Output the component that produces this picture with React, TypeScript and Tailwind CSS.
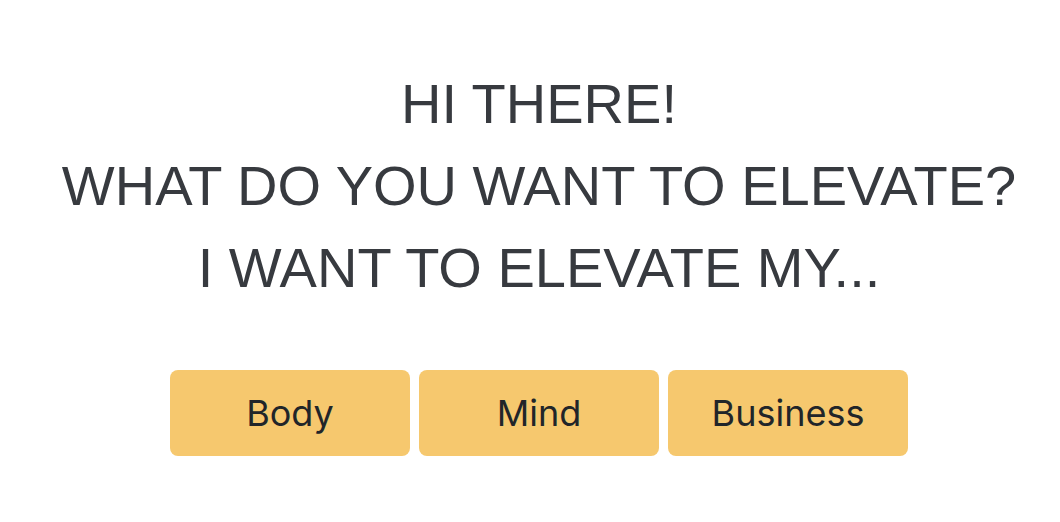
export default function App() {
  const options = ["Body", "Mind", "Business"];
  return (
    <div className="min-h-screen bg-white pt-[63px] pl-[18px] flex flex-col items-center">
      <h1
        className="text-center text-[56px] leading-[82px] text-[#373a3f] font-normal"
        style={{ fontFamily: '"Liberation Sans", Arial, sans-serif' }}
      >
        HI THERE!
        <br />
        WHAT DO YOU WANT TO ELEVATE?
        <br />
        I WANT TO ELEVATE MY...
      </h1>
      <div className="mt-[61px] flex gap-[9px]">
        {options.map((o) => (
          <button
            key={o}
            className="w-[240px] h-[86px] rounded-[8px] bg-[#f6c86e] text-[#212529] text-[36px]"
            style={{ fontFamily: "Inter, sans-serif" }}
          >
            {o}
          </button>
        ))}
      </div>
    </div>
  );
}
